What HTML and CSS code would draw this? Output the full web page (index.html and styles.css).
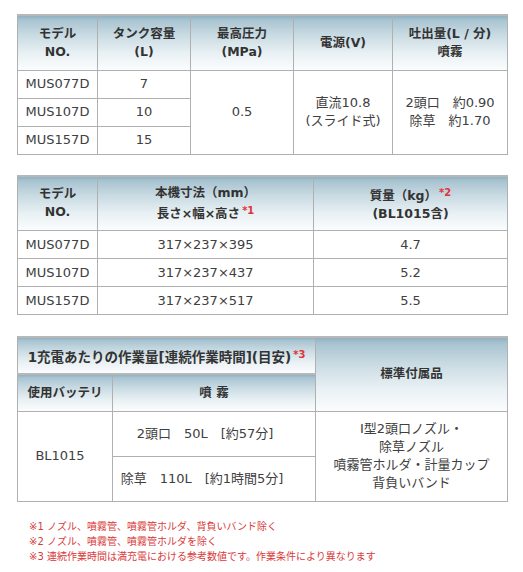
FILE: index.html
```html
<!DOCTYPE html>
<html lang="ja">
<head>
<meta charset="utf-8">
<link rel="stylesheet" href="styles.css">
</head>
<body>
<div class="page">
  <table class="spec t1">
    <colgroup><col style="width:80px"><col style="width:93px"><col style="width:103px"><col style="width:99px"><col></colgroup>
    <tr class="head">
      <th>モデル<br>NO.</th>
      <th>タンク容量<br>(L)</th>
      <th>最高圧力<br>(MPa)</th>
      <th>電源(V)</th>
      <th>吐出量(L / 分)<br>噴霧</th>
    </tr>
    <tr class="row"><td>MUS077D</td><td>7</td><td rowspan="3">0.5</td><td rowspan="3" class="tall">直流10.8<br>(スライド式)</td><td rowspan="3" class="tall">2頭口　約0.90<br>除草　約1.70</td></tr>
    <tr class="row"><td>MUS107D</td><td>10</td></tr>
    <tr class="row"><td>MUS157D</td><td>15</td></tr>
  </table>

  <table class="spec t2">
    <colgroup><col style="width:80px"><col style="width:216px"><col></colgroup>
    <tr class="head">
      <th>モデル<br>NO.</th>
      <th>本機寸法（mm）<br>長さ×幅×高さ<span class="note">*1</span></th>
      <th>質量（kg）<span class="note">*2</span><br>(BL1015含)</th>
    </tr>
    <tr class="row"><td>MUS077D</td><td>317×237×395</td><td>4.7</td></tr>
    <tr class="row"><td>MUS107D</td><td>317×237×437</td><td>5.2</td></tr>
    <tr class="row"><td>MUS157D</td><td>317×237×517</td><td>5.5</td></tr>
  </table>

  <table class="spec t3">
    <colgroup><col style="width:95px"><col style="width:203px"><col></colgroup>
    <tr class="head2">
      <th colspan="2" class="wide">1充電あたりの作業量[連続作業時間](目安)<span class="note">*3</span></th>
      <th rowspan="2">標準付属品</th>
    </tr>
    <tr class="head2">
      <th>使用バッテリ</th>
      <th>噴 霧</th>
    </tr>
    <tr class="sub">
      <td rowspan="2" class="batt">BL1015</td>
      <td class="work">2頭口　50L　[約57分]</td>
      <td rowspan="2" class="acc">I型2頭口ノズル・<br>除草ノズル<br>噴霧管ホルダ・計量カップ<br>背負いバンド</td>
    </tr>
    <tr class="sub">
      <td class="work w2">除草　110L　[約1時間5分]</td>
    </tr>
  </table>

  <ul class="notes">
    <li>※1 ノズル、噴霧管、噴霧管ホルダ、背負いバンド除く</li>
    <li>※2 ノズル、噴霧管、噴霧管ホルダを除く</li>
    <li>※3 連続作業時間は満充電における参考数値です。作業条件により異なります</li>
  </ul>
</div>
</body>
</html>
```

FILE: styles.css
```css
* { box-sizing: border-box; }
html, body { margin: 0; padding: 0; background: #fff; }
body {
  font-family: "DejaVu Sans", "Noto Sans CJK JP", sans-serif;
  color: #404040;
  font-size: 13px;
}
.page {
  padding: 14px 0 0 17px;
  width: 508px;
}
.spec {
  border-collapse: collapse;
  width: 491px;
  table-layout: fixed;
  border: 1px solid #a4a4a4;
}
.spec th, .spec td {
  border: 1px solid #b0b0b0;
  text-align: center;
  vertical-align: middle;
  padding: 0;
  line-height: 18px;
}
.spec th {
  font-weight: bold;
  font-size: 12.5px;
  color: #333;
  background: linear-gradient(#8fb1c2 0, #a9c4d1 8%, #c8dae2 35%, #e9f1f4 70%, #fbfcfd 100%);
  border-top: 2px solid #b8b8b8;
}
.spec th.wide { font-size: 13.5px; }
.head th { height: 55px; }
.row td { height: 28px; }
.t2, .t3 { margin-top: 20px; }
.t3 { margin-top: 21px; }
.head2 th { height: 37px; }
.sub td { height: 45px; }
.work { padding-right: 18px !important; }
.w2 { padding-right: 24px !important; }
.batt { padding-right: 10px !important; }
.acc { line-height: 18px; }
.note {
  color: #e0333a;
  font-size: 10px;
  vertical-align: 4px;
  margin-left: 2px;
}
.notes {
  list-style: none;
  margin: 17px 0 0 0;
  padding: 0 0 0 12px;
  color: #d93a3a;
  font-size: 10px;
  line-height: 15px;
}
```
